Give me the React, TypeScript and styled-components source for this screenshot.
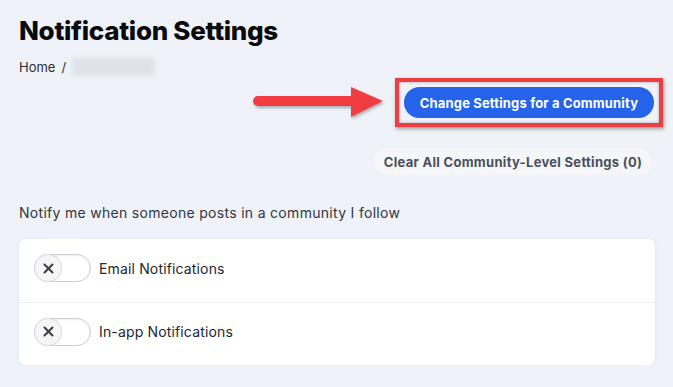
import React from "react";
import styled, { createGlobalStyle } from "styled-components";

const GlobalStyle = createGlobalStyle`
  html, body {
    margin: 0;
    padding: 0;
    background: #eff3f9;
  }
  body {
    font-family: Inter, "Noto Sans", "Liberation Sans", sans-serif;
    color: #1c1d21;
  }
`;

const Page = styled.div`
  width: 636px;
  padding: 15px 0 0 19px;
`;

const Title = styled.h1`
  margin: 0;
  font-size: 26px;
  line-height: 32px;
  font-weight: 800;
  letter-spacing: -0.3px;
  color: #0b0b0d;
`;

const Breadcrumb = styled.div`
  display: flex;
  align-items: center;
  gap: 6px;
  margin-top: 10px;
  font-size: 13px;
  color: #2b2d33;
  height: 20px;
`;

const Blurred = styled.span`
  display: inline-block;
  width: 83px;
  height: 18px;
  background: #dfe3e9;
  filter: blur(2px);
  border-radius: 3px;
`;

const Actions = styled.div`
  display: flex;
  flex-direction: column;
  align-items: flex-end;
  margin-top: 1px;
`;

const HighlightRow = styled.div`
  display: flex;
  align-items: center;
  gap: 10px;
  margin-right: -8px;
`;

const Frame = styled.div`
  border: 4px solid #ef3e42;
  padding: 5px;
  box-shadow: 1px 2px 4px rgba(0, 0, 0, 0.35), inset 0 0 3px rgba(0, 0, 0, 0.35);
  display: flex;
`;

const PrimaryButton = styled.button`
  width: 250px;
  height: 31px;
  border: none;
  border-radius: 16px;
  background: #2563eb;
  color: #fff;
  font-family: inherit;
  font-size: 13px;
  font-weight: 700;
  letter-spacing: 0.15px;
  cursor: pointer;
`;

const GhostButton = styled.button`
  margin-top: 21px;
  margin-right: 3px;
  width: 278px;
  height: 27px;
  border: none;
  border-radius: 14px;
  background: #f4f6f9;
  color: #4a4f5c;
  font-family: inherit;
  font-size: 13px;
  font-weight: 700;
  letter-spacing: 0.3px;
  cursor: pointer;
`;

const Caption = styled.p`
  margin: 29px 0 0;
  font-size: 14px;
  line-height: 18px;
  letter-spacing: 0.3px;
  color: #33363d;
`;

const Card = styled.div`
  margin-top: 17px;
  background: #fff;
  border-radius: 7px;
  box-shadow: 0 1px 4px rgba(30, 45, 80, 0.08);
`;

const Row = styled.div`
  box-sizing: border-box;
  height: 63px;
  display: flex;
  align-items: center;
  gap: 8px;
  padding: 0 15px 5px;
  & + & {
    border-top: 1px solid #eceef2;
  }
`;

const Toggle = styled.div`
  box-sizing: border-box;
  width: 57px;
  height: 28px;
  border-radius: 14px;
  border: 1px solid #c9cdd3;
  background: #fff;
  box-shadow: inset 0 1px 2px rgba(0, 0, 0, 0.06);
  display: flex;
  align-items: center;
`;

const Knob = styled.div`
  width: 26px;
  height: 26px;
  border-radius: 50%;
  background: #f6f6f7;
  box-shadow: 0 0 0 1px #d8dbe0;
  display: flex;
  align-items: center;
  justify-content: center;
`;

const Label = styled.span`
  font-size: 14px;
  letter-spacing: 0.15px;
  color: #25272c;
`;

const Arrow = () => (
  <svg width="132" height="34" viewBox="0 0 132 34" style={{ overflow: "visible" }}>
    <defs>
      <filter id="sh" x="-10%" y="-30%" width="120%" height="160%">
        <feDropShadow dx="1" dy="2" stdDeviation="1.5" floodColor="#000" floodOpacity="0.3" />
      </filter>
    </defs>
    <g filter="url(#sh)" fill="#ef3e42">
      <rect x="0" y="10" width="104" height="10" rx="5" />
      <path d="M98 1 L130 15 L98 31 Z" />
    </g>
  </svg>
);

const Cross = () => (
  <svg width="11" height="11" viewBox="0 0 11 11">
    <path d="M1.5 1.5 L9.5 9.5 M9.5 1.5 L1.5 9.5" stroke="#3b3d42" strokeWidth="2" strokeLinecap="round" />
  </svg>
);

const Switch = () => (
  <Toggle>
    <Knob>
      <Cross />
    </Knob>
  </Toggle>
);

export default function App() {
  return (
    <>
      <GlobalStyle />
      <Page>
        <Title>Notification Settings</Title>
        <Breadcrumb>
          <span>Home</span>
          <span>/</span>
          <Blurred />
        </Breadcrumb>
        <Actions>
          <HighlightRow>
            <Arrow />
            <Frame>
              <PrimaryButton>Change Settings for a Community</PrimaryButton>
            </Frame>
          </HighlightRow>
          <GhostButton>Clear All Community-Level Settings (0)</GhostButton>
        </Actions>
        <Caption>Notify me when someone posts in a community I follow</Caption>
        <Card>
          <Row>
            <Switch />
            <Label>Email Notifications</Label>
          </Row>
          <Row>
            <Switch />
            <Label>In-app Notifications</Label>
          </Row>
        </Card>
      </Page>
    </>
  );
}
